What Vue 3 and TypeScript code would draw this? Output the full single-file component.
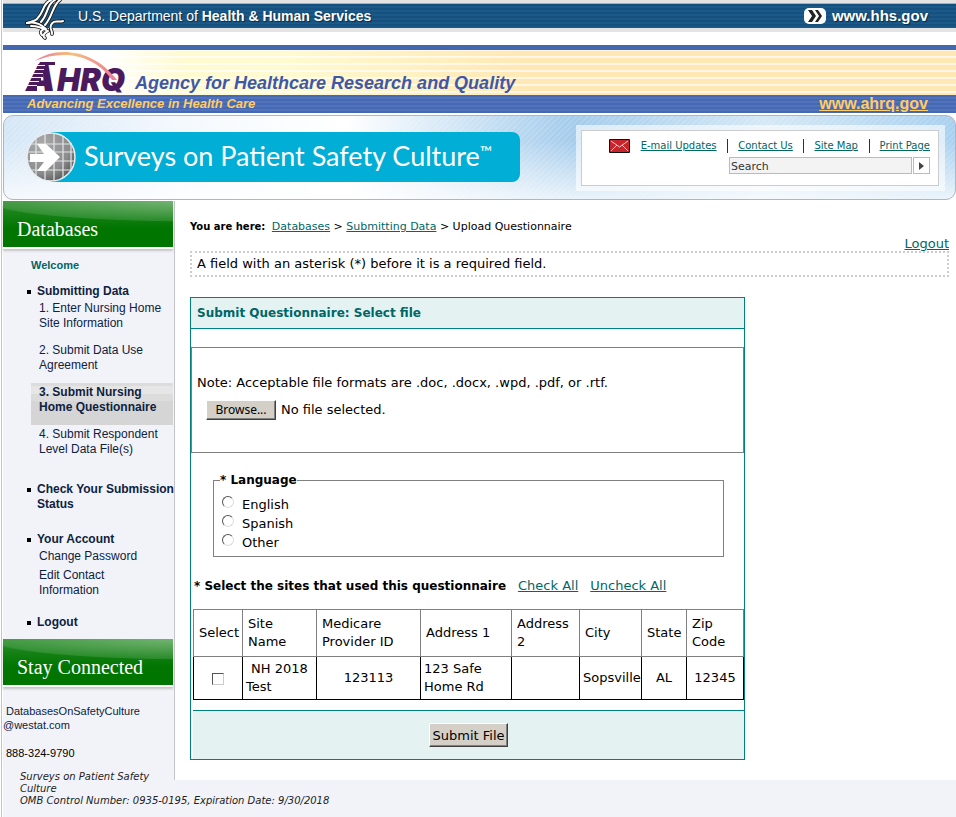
<script setup lang="ts">
import { ref } from 'vue'

interface MenuGroup {
  title: string
  compact?: boolean
  items: { label: string; active?: boolean }[]
}

interface Site {
  id: number
  name: string
  provider: string
  address1: string
  address2: string
  city: string
  state: string
  zip: string
}

const menu: MenuGroup[] = [
  {
    title: 'Submitting Data',
    items: [
      { label: '1. Enter Nursing Home Site Information' },
      { label: '2. Submit Data Use Agreement' },
      { label: '3. Submit Nursing Home Questionnaire', active: true },
      { label: '4. Submit Respondent Level Data File(s)' },
    ],
  },
  { title: 'Check Your Submission\nStatus', items: [] },
  {
    title: 'Your Account',
    compact: true,
    items: [{ label: 'Change Password' }, { label: 'Edit Contact\nInformation' }],
  },
  { title: 'Logout', items: [] },
]

const utilityLinks = ['E-mail Updates', 'Contact Us', 'Site Map', 'Print Page']
const languages = ['English', 'Spanish', 'Other']
const columns = ['Select', 'Site Name', 'Medicare Provider ID', 'Address 1', 'Address 2', 'City', 'State', 'Zip Code']
const sites: Site[] = [
  { id: 1, name: 'NH 2018 Test', provider: '123113', address1: '123 Safe Home Rd', address2: '', city: 'Sopsville', state: 'AL', zip: '12345' },
]

const search = ref('Search')
const language = ref('')
const selected = ref<number[]>([])
const fileName = ref('No file selected.')

function pickFile(event: Event) {
  const input = event.target as HTMLInputElement
  fileName.value = input.files?.[0]?.name ?? 'No file selected.'
}
function checkAll() {
  selected.value = sites.map((site) => site.id)
}
function uncheckAll() {
  selected.value = []
}
</script>

<template>
  <div class="page">
    <header>
      <div class="hhs">
        <div class="hhs-bar">
          <svg class="eagle" viewBox="0 0 42 42" aria-hidden="true">
            <g fill="none" stroke-linecap="round" stroke-linejoin="round">
              <g stroke="#1a1a1a" stroke-width="3.6">
                <path d="M26 1C17 5 20 12 12 20C10 22 6 23 2 24M30 1C21 6 24 14 16 23M35 1C27 7 28 17 20 26" />
                <path d="M2 24C10 22 16 25 21 30C17 30 14 33 17 36M6 27C13 27 18 29 23 32C19 34 17 37 20 39M38 22C33 24 29 20 26 26C24 30 28 32 27 35" />
              </g>
              <g stroke="#fff" stroke-width="2">
                <path d="M26 1C17 5 20 12 12 20C10 22 6 23 2 24M30 1C21 6 24 14 16 23M35 1C27 7 28 17 20 26" />
                <path d="M2 24C10 22 16 25 21 30C17 30 14 33 17 36M6 27C13 27 18 29 23 32C19 34 17 37 20 39M38 22C33 24 29 20 26 26C24 30 28 32 27 35" />
              </g>
            </g>
          </svg>
          <span class="hhs-name">U.S. Department of <b>Health &amp; Human Services</b></span>
          <a class="hhs-link" href="#">
            <svg width="22" height="16" viewBox="0 0 22 16" aria-hidden="true">
              <rect width="22" height="16" rx="5" fill="#fff" />
              <path d="M4 2h4l4 6-4 6H4l4-6zM11 2h3l4 6-4 6h-3l4-6z" fill="#222" />
            </svg>
            www.hhs.gov
          </a>
        </div>
      </div>
      <div class="ahrq">
        <svg class="ahrq-logo" width="106" height="43" viewBox="0 0 106 43" role="img" aria-label="AHRQ">
          <defs>
            <linearGradient id="arc" x1="0" x2="1">
              <stop offset="0" stop-color="#e87a9a" />
              <stop offset=".45" stop-color="#f5c07c" />
              <stop offset="1" stop-color="#f0799a" />
            </linearGradient>
          </defs>
          <g class="ahrq-letters">
            <text x="1" y="39" font-size="37">A</text>
            <text x="32" y="39" font-size="31">HRQ</text>
          </g>
          <path
            d="M15 10h15v3H13.500zM13 14h9v3H11.500zM11 18h9v3H9.500zM9 22h9v3H7.500zM7 26h9v3H5.500zM5 30h9v3H3.500zM3 34h9v5H.5z"
            fill="#4b1a5e"
          />
          <path d="M11 13.500h9M9 17.500h10M7 21.500h11M6 25.500h9M4 29.500h10M2 33.500h10" stroke="#fff" />
          <path d="M10 9C30-6 68-4 92 28L87 28C68 1 36-2 10 9Z" fill="url(#arc)" />
        </svg>
        <span class="ahrq-name">Agency for Healthcare Research and Quality</span>
      </div>
      <div class="tagline">
        <span>Advancing Excellence in Health Care</span>
        <a href="#">www.ahrq.gov</a>
      </div>
      <div class="banner">
        <div class="sops">
          <svg width="50" height="50" viewBox="0 0 50 50" aria-hidden="true">
            <defs>
              <radialGradient id="globe" cx=".3" cy=".25" r=".9">
                <stop offset="0" stop-color="#aaa" />
                <stop offset=".65" stop-color="#8c8c8c" />
                <stop offset="1" stop-color="#4d4d4d" />
              </radialGradient>
            </defs>
            <circle cx="25" cy="25" r="24" fill="url(#globe)" stroke="#e8eef2" stroke-width="1.5" />
            <path d="M10 7v36M19 2v46M28 1v48M37 4v42M45 11v28M5 12h40M2 20h46M1 29h48M4 38h42" stroke="#e3e6e8" stroke-width="1.2" />
            <path d="M4 22H18L11 12H20L34 25L20 39H11L18 30H4Z" fill="#fff" />
          </svg>
          <span class="sops-name">Surveys on Patient Safety Culture<sup>™</sup></span>
        </div>
        <div class="utility">
          <div class="utility-inner">
            <nav class="utility-links">
              <svg width="21" height="14" viewBox="0 0 21 14" aria-hidden="true">
                <rect width="21" height="14" rx="1" fill="#111" />
                <rect x="1" y="1" width="19" height="12" fill="#c7252b" />
                <path d="M2 2l8.500 6L19 2M2 12l6-6M19 12l-6-6" fill="none" stroke="#f5c9c9" />
              </svg>
              <a v-for="link in utilityLinks" :key="link" href="#">{{ link }}</a>
            </nav>
            <form class="search" @submit.prevent>
              <input v-model="search" type="text" aria-label="Search" />
              <button type="submit" aria-label="Go">
                <svg width="5" height="8" viewBox="0 0 5 8"><path d="M0 0l5 4-5 4z" fill="#444" /></svg>
              </button>
            </form>
          </div>
        </div>
      </div>
    </header>

    <div class="columns">
      <aside>
        <h2>Databases</h2>
        <nav class="menu">
          <a class="welcome" href="#">Welcome</a>
          <ul class="groups">
            <li v-for="group in menu" :key="group.title" :class="{ compact: group.compact, single: !group.items.length }">
              <a class="group-title" href="#">{{ group.title }}</a>
              <ul v-if="group.items.length">
                <li v-for="item in group.items" :key="item.label" :class="{ active: item.active }">
                  <a href="#">{{ item.label }}</a>
                </li>
              </ul>
            </li>
          </ul>
        </nav>
        <h2>Stay Connected</h2>
        <div class="contact">
          <a href="#"><span>DatabasesOnSafetyCulture</span><br />@westat.com</a>
          <p>888-324-9790</p>
        </div>
      </aside>

      <main>
        <div class="crumbs">
          <b>You are here:</b> <a href="#">Databases</a> &gt; <a href="#">Submitting Data</a> &gt; Upload Questionnaire
        </div>
        <div class="logout"><a href="#">Logout</a></div>
        <p class="notice">A field with an asterisk (*) before it is a required field.</p>

        <form class="panel" @submit.prevent>
          <h1>Submit Questionnaire: Select file</h1>
          <div class="upload">
            <p>Note: Acceptable file formats are .doc, .docx, .wpd, .pdf, or .rtf.</p>
            <div class="picker">
              <input id="file" type="file" @change="pickFile" />
              <label for="file">Browse...</label>
              <span>{{ fileName }}</span>
            </div>
          </div>
          <fieldset>
            <legend>* Language</legend>
            <label v-for="name in languages" :key="name">
              <input v-model="language" type="radio" name="language" :value="name" />
              <span>{{ name }}</span>
            </label>
          </fieldset>
          <div class="sites-head">
            <b>* Select the sites that used this questionnaire</b>
            <a href="#" @click.prevent="checkAll">Check All</a>
            <a href="#" @click.prevent="uncheckAll">Uncheck All</a>
          </div>
          <table>
            <colgroup>
              <col class="c-select" /><col class="c-name" /><col class="c-provider" /><col class="c-address1" />
              <col class="c-address2" /><col class="c-city" /><col class="c-state" /><col class="c-zip" />
            </colgroup>
            <thead>
              <tr><th v-for="column in columns" :key="column" scope="col">{{ column }}</th></tr>
            </thead>
            <tbody>
              <tr v-for="site in sites" :key="site.id">
                <td class="mid"><input v-model="selected" type="checkbox" :value="site.id" :aria-label="site.name" /></td>
                <td class="name">{{ site.name }}</td>
                <td class="mid">{{ site.provider }}</td>
                <td>{{ site.address1 }}</td>
                <td>{{ site.address2 }}</td>
                <td>{{ site.city }}</td>
                <td class="mid">{{ site.state }}</td>
                <td class="mid">{{ site.zip }}</td>
              </tr>
            </tbody>
          </table>
          <div class="actions"><button type="submit">Submit File</button></div>
        </form>
      </main>
    </div>

    <footer>
      <p class="program">Surveys on Patient Safety<br />Culture</p>
      <p>OMB Control Number: 0935-0195, Expiration Date: 9/30/2018</p>
    </footer>
  </div>
</template>

<style>
body {
  margin: 0;
  background: #fff;
}
</style>

<style scoped>
* {
  box-sizing: border-box;
}
.page {
  min-height: 100vh;
  margin-left: 1px;
  padding-left: 1px;
  border-left: 1px solid #c4c4c8;
  display: flex;
  flex-direction: column;
  font-family: "DejaVu Sans", sans-serif;
  font-size: 13px;
  line-height: 18px;
  color: #000;
}
p, h1, h2, ul {
  margin: 0;
  padding: 0;
}
a {
  color: #006666;
}
.hhs {
  height: 45px;
  padding-top: 3px;
  background: linear-gradient(#e4e4e4 0 32px, #fff 32px);
}
.hhs-bar {
  height: 25px;
  border-top: 1px solid #9db3c4;
  padding: 0 28px 0 22px;
  display: flex;
  align-items: center;
  background: repeating-linear-gradient(#15507f 0 2px, #1b5a88 2px 4px);
  font-family: "Liberation Sans", sans-serif;
  color: #fff;
  text-shadow: 1px 1px 1px #0a2a44;
}
.eagle {
  width: 42px;
  height: 42px;
  margin-top: 8px;
  flex: none;
}
.hhs-name {
  margin-left: 11px;
  font-size: 14px;
  flex: 1;
}
.hhs-link {
  display: flex;
  align-items: center;
  gap: 6px;
  font-size: 15px;
  font-weight: bold;
  color: #fff;
  text-decoration: none;
}
.ahrq {
  height: 50px;
  border-top: 5px solid #4468b0;
  padding-left: 22px;
  display: flex;
  align-items: flex-end;
  background:
    linear-gradient(90deg, #fff 100px, rgba(255, 255, 255, 0) 180px),
    repeating-linear-gradient(rgba(255, 255, 255, .6) 0 1px, rgba(255, 255, 255, 0) 1px 6px, rgba(255, 255, 255, .7) 6px 7px),
    linear-gradient(90deg, #fffad0 30%, #ffe8b4 55%);
}
.ahrq-logo {
  flex: none;
  overflow: visible;
}
.ahrq-letters {
  font-family: Inter, sans-serif;
  font-weight: 900;
  font-style: italic;
  fill: #4b1a5e;
}
.ahrq-name {
  margin-left: 4px;
  font: italic bold 18px/24px "Liberation Sans", sans-serif;
  color: #3f57a6;
}
.tagline {
  height: 18px;
  padding: 0 28px 0 24px;
  display: flex;
  justify-content: space-between;
  background: repeating-linear-gradient(#4468b2 0 2px, #5073bb 2px 4px);
  font: bold 13px/18px "Liberation Sans", sans-serif;
  color: #ffcc66;
}
.tagline span {
  font-style: italic;
}
.tagline a {
  font-size: 16px;
  color: #ffcc66;
}
.banner {
  height: 85px;
  margin: 2px 0 1px;
  padding: 9px 10px 0 22px;
  border: 1px solid #b4b4be;
  border-radius: 10px;
  display: flex;
  align-items: flex-start;
  justify-content: space-between;
  background:
    repeating-linear-gradient(135deg, rgba(255, 255, 255, .12) 0 2px, rgba(255, 255, 255, 0) 2px 4px),
    linear-gradient(rgba(255, 255, 255, 0) 30%, rgba(255, 255, 255, .75)),
    linear-gradient(90deg, #d4e6f6, #f3f8fd 18%, #fff 36%, #a2cbeb 60%, #d5e8f6 80%, #a8d0ef);
}
.sops {
  height: 50px;
  margin-top: 7px;
  padding-right: 28px;
  display: flex;
  border-radius: 8px;
  background: linear-gradient(90deg, transparent 25px, #00aed6 25px);
}
.sops svg {
  flex: none;
}
.sops-name {
  margin-left: 8px;
  font: 27px/48px Lato, sans-serif;
  color: #fff;
  white-space: nowrap;
}
.sops-name sup {
  font-size: 16px;
  line-height: 16px;
  vertical-align: 8px;
}
.utility {
  width: 369px;
  padding: 5px 6px 5px 5px;
  background: rgba(255, 255, 255, .6);
}
.utility-inner {
  height: 56px;
  padding: 8px 8px 0 27px;
  border: 1px solid #ccc;
  background: #fff;
  font-size: 10px;
}
.utility-links {
  display: flex;
  align-items: center;
  justify-content: space-between;
  line-height: 14px;
}
.utility-links a + a {
  padding-left: 10px;
  border-left: 1px solid #234;
}
.search {
  margin-top: 4px;
  display: flex;
  justify-content: flex-end;
  gap: 1px;
}
.search input {
  width: 183px;
  height: 17px;
  padding: 2px 1px 0;
  border: 1px solid #bbb;
  background: #f3f3f3;
  font: 11px "DejaVu Sans", sans-serif;
  color: #333;
}
.search button {
  width: 17px;
  height: 17px;
  padding: 0;
  border: 1px solid #bbb;
  background: #fff;
  display: flex;
  align-items: center;
  justify-content: center;
}
.columns {
  display: flex;
}
aside {
  width: 172px;
  flex: none;
  border-right: 1px solid #c4c4c8;
  background: #f2f3f8;
  font: 12px/15px "Liberation Sans", sans-serif;
}
aside h2 {
  height: 46px;
  margin-right: 1px;
  padding: 16px 0 0 14px;
  background:
    radial-gradient(ellipse 120% 45% at 110% 0, rgba(255, 255, 255, .35), rgba(255, 255, 255, .12) 96%, transparent),
    linear-gradient(#2a8c2a, #007500 60%);
  box-shadow: 0 2px 0 #fff, 0 4px 2px #c6c6c8;
  font: 20px/24px "Liberation Serif", serif;
  color: #fff;
}
aside a {
  color: #0d2240;
  text-decoration: none;
}
.menu {
  padding: 11px 1px 0 28px;
}
.menu .welcome {
  display: block;
  margin-bottom: 11px;
  font-weight: bold;
  font-size: 11px;
  color: #006666;
}
.menu ul {
  list-style: none;
}
.groups > li {
  position: relative;
  margin-bottom: 15px;
}
.groups > li::before {
  content: "";
  position: absolute;
  left: -4px;
  top: 6px;
  width: 4px;
  height: 4px;
  background: #000;
}
.groups > li.single {
  padding-bottom: 5px;
}
.groups > li:last-child {
  margin-bottom: 4px;
}
.group-title {
  display: block;
  padding-left: 6px;
  font-weight: bold;
  white-space: pre;
}
.groups ul li {
  padding: 2px 8px 10px;
}
.groups .compact ul li {
  padding: 2px 8px;
  white-space: pre-line;
}
.groups ul .active {
  font-weight: bold;
  background: linear-gradient(#dcdcdc 0 3px, #e6e6e6 3px 11px, #dcdcdc 11px 18px, #d5d5d5 18px);
}
.contact {
  padding: 19px 0 0;
  font-size: 11px;
  line-height: 14px;
}
.contact span,
.contact p {
  padding-left: 3px;
}
.contact p {
  margin: 14px 0 0;
}
main {
  flex: 1;
  min-width: 0;
  padding: 17px 7px 20px 15px;
}
.crumbs {
  font-size: 11px;
}
.crumbs b {
  margin-right: 3px;
  font-size: 10px;
}
.logout {
  text-align: right;
  line-height: 15px;
}
.notice {
  padding: 2px 5px;
  border: 2px dotted #ccc;
  line-height: 18px;
}
.panel {
  max-width: 555px;
  margin-top: 20px;
  border: 1px solid #008080;
}
.panel h1 {
  padding: 6px 6px;
  border-bottom: 1px solid #008080;
  background: #e5f2f2;
  font-size: 12px;
  line-height: 18px;
  color: #006666;
}
.upload {
  height: 106px;
  margin-top: 18px;
  padding: 26px 5px 0;
  border: 1px solid #808080;
}
.picker {
  position: relative;
  margin: 8px 0 0 9px;
  display: flex;
  align-items: center;
  gap: 5px;
}
.picker input {
  position: absolute;
  width: 70px;
  height: 20px;
  opacity: 0;
}
.picker label,
.actions button {
  border: 1px solid;
  border-color: #fff #404040 #404040 #fff;
  box-shadow: inset -1px -1px #808080;
  background: #d4d0c8;
  color: #000;
}
.picker label {
  width: 70px;
  text-align: center;
  font: 12px/18px "Noto Sans", sans-serif;
}
fieldset {
  margin: 18px 20px 0 22px;
  padding: 6px 7px 4px;
  border: 1px solid #808080;
  display: flex;
  flex-direction: column;
}
legend {
  padding: 0;
  margin-left: -1px;
  font-weight: bold;
  font-size: 12px;
}
fieldset label {
  height: 19px;
  display: flex;
  gap: 7px;
  align-items: flex-start;
}
fieldset label span {
  padding-top: 1px;
}
fieldset input {
  appearance: none;
  width: 12px;
  height: 12px;
  margin: 1px;
  border: 1px solid;
  border-color: #555 #ddd #ddd #555;
  border-radius: 50%;
  background: #fff;
}
fieldset input:checked {
  background: radial-gradient(#000 2px, #fff 3px);
}
.sites-head {
  margin: 20px 3px 14px;
  display: flex;
  gap: 12px;
}
.sites-head b {
  font-size: 12px;
}
table {
  width: 551px;
  max-width: 100%;
  margin-left: 2px;
  border-collapse: collapse;
  table-layout: fixed;
}
.c-select { width: 49px; }
.c-name { width: 74px; }
.c-provider { width: 104px; }
.c-address1 { width: 91px; }
.c-address2 { width: 68px; }
.c-city { width: 62px; }
.c-state { width: 45px; }
.c-zip { width: 57px; }
th {
  padding: 5px;
  border: 1px solid #808080;
  font-weight: normal;
  text-align: left;
}
td {
  padding: 3px;
  border: 1px solid #000;
}
td.name {
  text-indent: 5px;
}
.mid {
  text-align: center;
}
td input {
  appearance: none;
  width: 12px;
  height: 12px;
  margin: 0;
  border: 1px solid;
  border-color: #555 #ccc #ccc #555;
  background: #fff;
  vertical-align: middle;
}
td input:checked {
  background: #000;
}
.actions {
  margin: 10px 0 0 2px;
  padding: 12px 0 12px;
  border-top: 1px solid #008080;
  background: #e5f2f2;
  text-align: center;
}
.actions button {
  height: 24px;
  padding: 0 2px;
  font: 13px "DejaVu Sans", sans-serif;
}
footer {
  flex: 1;
  padding: 0 17px 10px;
  background: #f2f3f8;
  font-size: 10px;
  line-height: 12px;
  font-style: italic;
  color: #222;
}
.program {
  margin-top: -9px;
}
</style>
